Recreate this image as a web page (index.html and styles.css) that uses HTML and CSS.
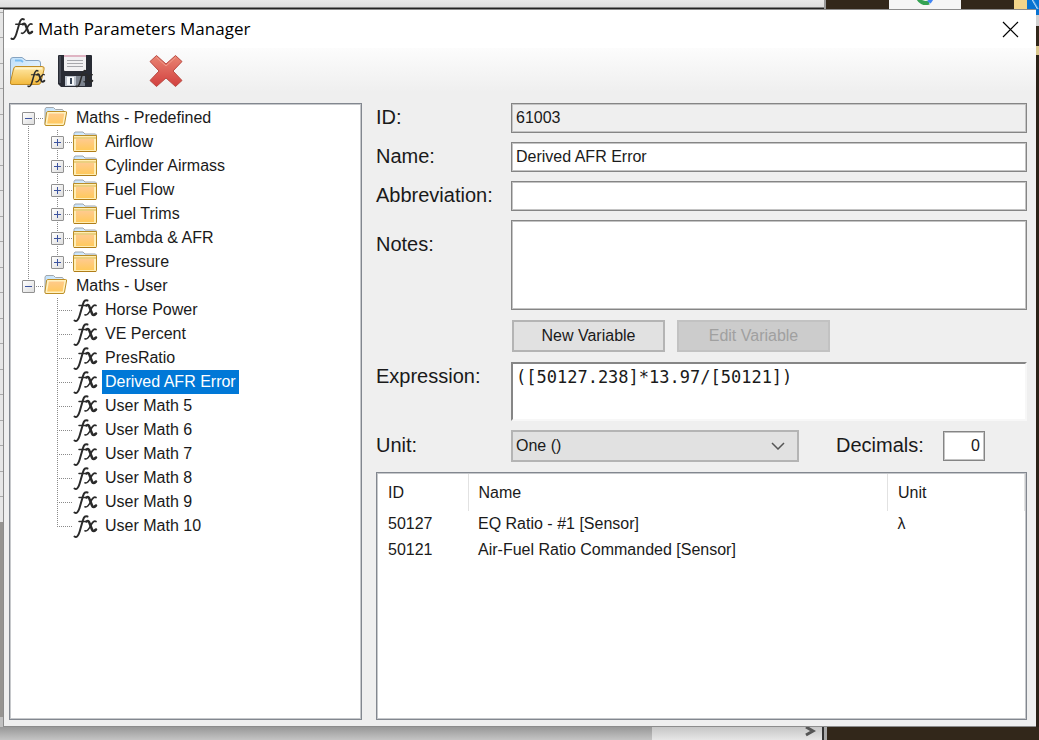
FILE: index.html
```html
<!DOCTYPE html>
<html lang="en">
<head>
<meta charset="utf-8">
<title>Math Parameters Manager</title>
<link rel="stylesheet" href="styles.css">
</head>
<body>
<svg class="defs" width="0" height="0" aria-hidden="true">
  <defs>
    <linearGradient id="gold" x1="0" y1="0" x2="0" y2="1"><stop offset="0" stop-color="#ffe9a8"/><stop offset="1" stop-color="#f3b93c"/></linearGradient>
    <linearGradient id="peach" x1="0" y1="0" x2="0" y2="1"><stop offset="0" stop-color="#ffca8e"/><stop offset="1" stop-color="#ffc95c"/></linearGradient>
    <linearGradient id="sky" x1="0" y1="0" x2="1" y2="1"><stop offset="0" stop-color="#bfe0fb"/><stop offset="1" stop-color="#f4f9fd"/></linearGradient>
    <linearGradient id="red" x1="0" y1="0" x2="0" y2="1"><stop offset="0" stop-color="#e98472"/><stop offset="1" stop-color="#d2403f"/></linearGradient>
    <symbol id="fx" viewBox="0 0 26 25">
      <g fill="none" stroke="#2a2a2a" stroke-linecap="round">
        <path d="M2.500 22.500Q5.500 24.500 7.500 18L11 6Q12.500 1 15.500 2.500" stroke-width="2"/>
        <path d="M7 7.500H14" stroke-width="1.500"/>
        <path d="M14.500 7.500Q16.500 6 17.500 9L20 15.500Q21 18.500 24 15.500" stroke-width="2.500"/>
        <path d="M24 7.500Q21.500 6 18.800 11.500Q15.500 18 13 16.800" stroke-width="1.700"/>
      </g>
    </symbol>
    <symbol id="folder" viewBox="0 0 26 24">
      <path d="M2 8V3.500L3 2H11L13 4H23.500L24.500 5V8Z" fill="url(#sky)" stroke="#a3a8ad"/>
      <path d="M1.500 5.500H24.500V20.500Q24.500 21.500 23.500 21.500H2.500Q1.500 21.500 1.500 20.500Z" fill="#ffeeb4" stroke="#b98d27"/>
      <path d="M2 21.500H24" stroke="#b07d18"/>
      <path d="M2 8H24" stroke="#d8b04b"/>
      <rect x="4" y="9" width="18" height="11" fill="url(#peach)"/>
    </symbol>
    <symbol id="folder-open" viewBox="0 0 26 24">
      <path d="M2 18V3L3 1.500H10.500L12.500 3.500H19.500L20.500 5V12Z" fill="url(#sky)" stroke="#a3a8ad"/>
      <path d="M5 6.500H22.500L20.500 18.500H3Z" fill="url(#peach)" stroke="#fff2c2" stroke-width="2"/>
      <path d="M4.500 5.500H22.500Q24 5.500 23.500 7L21.500 18Q21.200 19.500 20 19.500H3Q1.500 19.500 2 17.500L3.500 7Q3.800 5.500 4.500 5.500Z" fill="none" stroke="#bd8e25"/>
    </symbol>
  </defs>
</svg>
<div class="desktop">
  <div class="top-strip" aria-hidden="true">
    <div class="app-top"></div>
    <div class="wall wall-left"></div>
    <div class="tile"><svg width="20" height="8" viewBox="0 0 20 8"><path d="M3 -3A8 7 0 0 0 14 2.500" fill="none" stroke="#34a353" stroke-width="4"/><path d="M14 2.500L17 -2" stroke="#4285f4" stroke-width="4"/></svg></div>
    <div class="wall"></div>
    <div class="yellow"></div>
    <div class="blue"></div>
  </div>
  <div class="middle">
    <div class="left-strip" aria-hidden="true"></div>
    <main class="dialog">
      <header class="titlebar">
        <svg width="25" height="24"><use href="#fx"/></svg>
        <h1>Math Parameters Manager</h1>
        <button class="close" type="button" aria-label="Close"><svg width="17" height="17" viewBox="0 0 17 17"><path d="M1 1L16 16M16 1L1 16" stroke="#000" stroke-width="1.200"/></svg></button>
      </header>
      <div class="toolbar">
        <button type="button" aria-label="Open math"><svg width="38" height="36" viewBox="0 0 38 36">
          <path d="M1.500 29V7Q1.500 4.500 4 4.500H13L17 7.500H29Q31.500 7.500 31.500 10V22Z" fill="url(#sky)" stroke="#86a3c0"/>
          <path d="M6 7.500H12L14 9" fill="none" stroke="#78bdf4" stroke-width="2"/>
          <path d="M7 13.500H33Q36 13.500 35 16.500L32 29Q31.500 31.500 29 31.500H3Q.800 31.500 1.500 29L4.500 16Q5 13.500 7 13.500Z" fill="url(#gold)" stroke="#c18c24"/>
          <path d="M6 15.500H33" stroke="#fff3c8" stroke-width="2"/>
          <use href="#fx" x="17" y="16" width="20" height="19"/></svg></button>
        <button type="button" aria-label="Save"><svg width="38" height="36" viewBox="0 0 38 36">
          <path d="M2 2H34Q35 2 35 3V33Q35 34 34 34H4L1 31V3Q1 2 2 2Z" fill="#282b34"/>
          <path d="M3 3V30" stroke="#626875"/>
          <path d="M7 2H29V17Q29 18 28 18H8Q7 18 7 17Z" fill="#f1f0f2"/>
          <path d="M7 2H29V4H7Z" fill="#dfb4c3"/>
          <path d="M10 7.500H26M10 10.500H26M10 13.500H26" stroke="#a7a7ac"/>
          <path d="M8 23H28V33H8Z" fill="#bdc4ce"/>
          <path d="M10 24H17V32H10Z" fill="#f6f8fa"/><path d="M13 25H15V31H13Z" fill="#3a4758"/>
          <path d="M19 23H28V33H19Z" fill="#7c838e"/>
          <use href="#fx" x="17" y="16" width="20" height="19"/></svg></button>
        <button class="delete" type="button" aria-label="Delete"><svg width="36" height="36" viewBox="0 0 36 36">
          <path d="M8.500 2.500L18 11L27.500 2.500L34 8.500L25 18L34 27.500L27.500 33.500L18 25L8.500 33.500L2 27.500L11 18L2 8.500Z" fill="url(#red)" stroke="#b94b43" stroke-linejoin="round"/>
          <path d="M8.500 4.500L18 13L27.500 4.500" fill="none" stroke="#f09a8a"/></svg></button>
      </div>
      <div class="content">
        <nav class="tree panel" aria-label="Maths">
          <ul>
            <li><div class="row"><span class="cell start"><button type="button" class="minus" aria-label="Collapse"></button></span><svg width="26" height="24"><use href="#folder-open"/></svg><span class="label">Maths - Predefined</span></div>
              <ul class="trunk">
                <li class="row"><span class="cell"><button type="button" class="plus" aria-label="Expand"></button></span><svg width="26" height="24"><use href="#folder"/></svg><span class="label">Airflow</span></li>
                <li class="row"><span class="cell"><button type="button" class="plus" aria-label="Expand"></button></span><svg width="26" height="24"><use href="#folder"/></svg><span class="label">Cylinder Airmass</span></li>
                <li class="row"><span class="cell"><button type="button" class="plus" aria-label="Expand"></button></span><svg width="26" height="24"><use href="#folder"/></svg><span class="label">Fuel Flow</span></li>
                <li class="row"><span class="cell"><button type="button" class="plus" aria-label="Expand"></button></span><svg width="26" height="24"><use href="#folder"/></svg><span class="label">Fuel Trims</span></li>
                <li class="row"><span class="cell"><button type="button" class="plus" aria-label="Expand"></button></span><svg width="26" height="24"><use href="#folder"/></svg><span class="label">Lambda &amp; AFR</span></li>
                <li class="row"><span class="cell end"><button type="button" class="plus" aria-label="Expand"></button></span><svg width="26" height="24"><use href="#folder"/></svg><span class="label">Pressure</span></li>
              </ul>
            </li>
            <li><div class="row"><span class="cell end"><button type="button" class="minus" aria-label="Collapse"></button></span><svg width="26" height="24"><use href="#folder-open"/></svg><span class="label">Maths - User</span></div>
              <ul>
                <li class="row"><span class="cell"></span><svg width="26" height="25"><use href="#fx"/></svg><span class="label">Horse Power</span></li>
                <li class="row"><span class="cell"></span><svg width="26" height="25"><use href="#fx"/></svg><span class="label">VE Percent</span></li>
                <li class="row"><span class="cell"></span><svg width="26" height="25"><use href="#fx"/></svg><span class="label">PresRatio</span></li>
                <li class="row"><span class="cell"></span><svg width="26" height="25"><use href="#fx"/></svg><span class="label selected">Derived AFR Error</span></li>
                <li class="row"><span class="cell"></span><svg width="26" height="25"><use href="#fx"/></svg><span class="label">User Math 5</span></li>
                <li class="row"><span class="cell"></span><svg width="26" height="25"><use href="#fx"/></svg><span class="label">User Math 6</span></li>
                <li class="row"><span class="cell"></span><svg width="26" height="25"><use href="#fx"/></svg><span class="label">User Math 7</span></li>
                <li class="row"><span class="cell"></span><svg width="26" height="25"><use href="#fx"/></svg><span class="label">User Math 8</span></li>
                <li class="row"><span class="cell"></span><svg width="26" height="25"><use href="#fx"/></svg><span class="label">User Math 9</span></li>
                <li class="row"><span class="cell end"></span><svg width="26" height="25"><use href="#fx"/></svg><span class="label">User Math 10</span></li>
              </ul>
            </li>
          </ul>
        </nav>
        <form class="details">
          <div class="fields">
            <label for="pid">ID:</label><input id="pid" class="box" type="text" value="61003" readonly>
            <label for="pname">Name:</label><input id="pname" class="box" type="text" value="Derived AFR Error">
            <label for="abbr">Abbreviation:</label><input id="abbr" class="box" type="text">
            <label for="notes" class="top-label notes-label">Notes:</label><textarea id="notes" class="box notes"></textarea>
            <div class="actions"><button type="button">New Variable</button><button type="button" disabled>Edit Variable</button></div>
            <label for="expr" class="top-label">Expression:</label><textarea id="expr" class="expression" spellcheck="false">([50127.238]*13.97/[50121])</textarea>
            <label for="unit">Unit:</label>
            <div class="unit-line">
              <div class="select-wrap"><select id="unit"><option>One ()</option></select><svg width="14" height="8" viewBox="0 0 14 8"><path d="M1 1L7 7L13 1" fill="none" stroke="#555" stroke-width="1.500"/></svg></div>
              <label for="dec">Decimals:</label><input id="dec" class="box decimals" type="text" value="0">
            </div>
          </div>
          <div class="panel variables">
            <table>
              <colgroup><col class="col-id"><col class="col-name"><col class="col-unit"></colgroup>
              <thead><tr><th>ID</th><th>Name</th><th>Unit</th></tr></thead>
              <tbody>
                <tr><td>50127</td><td>EQ Ratio - #1 [Sensor]</td><td>λ</td></tr>
                <tr><td>50121</td><td>Air-Fuel Ratio Commanded [Sensor]</td><td></td></tr>
              </tbody>
            </table>
          </div>
        </form>
      </div>
    </main>
    <div class="right-strip" aria-hidden="true"></div>
  </div>
  <div class="bottom-strip" aria-hidden="true">
    <div class="track"></div>
    <div class="scroll-end"><svg width="12" height="10" viewBox="0 0 12 10"><path d="M2 0L9 4L2 8" fill="none" stroke="#555" stroke-width="3"/></svg></div>
    <div class="app-edge"></div>
    <div class="wall"></div>
  </div>
</div>
</body>
</html>
```
FILE: styles.css
```css
* { box-sizing: border-box; }
body { margin: 0; font: 16px/24px "Liberation Sans", Arial, sans-serif; color: #1a1a1a; }
button, input, textarea, select { font: inherit; color: inherit; margin: 0; border-radius: 0; }
ul { list-style: none; margin: 0; padding: 0; }
svg { display: block; flex: none; }
.defs { position: absolute; }

/* Desktop behind the dialog */
.desktop { display: grid; grid-template-rows: 9px 1fr 13px; min-height: 100vh; background: #32271a; }
.top-strip, .bottom-strip { display: flex; overflow: hidden; }
.app-top { flex: 0 0 826px; background: linear-gradient(#e8e8e8, #dedede 7px, #222 8px); border-right: 2px solid #999; }
.wall { flex: 1 1 0; }
.wall-left { flex: 0 0 63px; }
.tile { flex: 0 0 72px; display: flex; justify-content: center; background: #f5f5f5; }
.yellow { flex: 0 0 13px; background: #f3d58a; }
.blue { flex: 0 0 12px; background: linear-gradient(60deg, #0873d2 55%, #b9dcf7 60%, #0873d2 72%); }
.middle { display: grid; grid-template-columns: 3px 1fr 3px; }
.left-strip {
  background:
    linear-gradient(#969491, #969491) 0 513px / 3px 195px no-repeat,
    linear-gradient(#c0c0c0, #c0c0c0) 0 708px / 3px 20px no-repeat,
    linear-gradient(#e6e6e6 3px, #aaa 3px 4px, #e6e6e6 4px 29px, #aaa 29px 30px, #e6e6e6 30px) 0 25px / 3px 51px;
}
.right-strip { background: linear-gradient(#0873d2 6px, #d0d0d0 6px 17px, #32271a 17px 37px, #d9c78d 37px 46px, #2b2117 46px); }
.track { flex: 0 0 652px; background: linear-gradient(#989898, #c4c4c4); }
.scroll-end { flex: 0 0 170px; display: flex; justify-content: flex-end; padding-right: 6px; background: linear-gradient(#c6c6c6, #e6e6e6); }
.app-edge { flex: 0 0 5px; background: #a8a8a8; border-left: 2px solid #333; }

/* Dialog frame */
.dialog { display: flex; flex-direction: column; background: #efefef; border: 1px solid #8c8c8c; border-right: 0; min-width: 0; }
.titlebar { display: flex; align-items: center; height: 38px; padding: 0 17px 0 5px; background: #fff; }
.titlebar h1 { flex: 1; margin: 0 0 0 4px; font: 17px/24px "Open Sans", "Segoe UI", sans-serif; color: #000; }
.close { border: 0; padding: 0; background: none; }
.toolbar { display: flex; align-items: flex-start; gap: 10px; height: 55px; padding: 5px 5px 0; background: linear-gradient(#fcfcfc, #efefef 44px); }
.toolbar button { border: 0; padding: 0; background: none; }
.toolbar .delete { margin-left: 43px; }
.content { flex: 1; display: grid; grid-template-columns: 353fr 651fr; gap: 14px; padding: 0 9px 6px 5px; }
.panel { background: #fff; border: 1px solid #82878f; outline: 1px solid #c6c8cb; outline-offset: -2px; min-width: 0; }

/* Tree */
.tree { padding: 2px 4px; }
.tree ul ul { padding-left: 29px; }
.row { display: flex; align-items: center; height: 24px; }
.cell {
  flex: none; display: flex; align-items: center; width: 29px; height: 24px; padding-left: 8px;
  background:
    repeating-linear-gradient(to right, #8a8a8a 0 1px, transparent 1px 2px) 14px 12px / 15px 1px no-repeat,
    repeating-linear-gradient(#8a8a8a 0 1px, transparent 1px 2px) 14px 0 / 1px 24px no-repeat;
}
.cell.end { background-size: 15px 1px, 1px 12px; }
.cell.start { background-position: 14px 12px, 14px 12px; background-size: 15px 1px, 1px 12px; }
.trunk { background: repeating-linear-gradient(#8a8a8a 0 1px, transparent 1px 2px) 14px 0 / 1px 100% no-repeat; }
.minus, .plus { width: 13px; height: 13px; padding: 0; border: 1px solid #919191; border-radius: 1px; background: linear-gradient(#3d54a0, #3d54a0) center / 7px 1px no-repeat, linear-gradient(135deg, #fff, #dedede); }
.plus { background: linear-gradient(#3d54a0, #3d54a0) center / 7px 1px no-repeat, linear-gradient(#3d54a0, #3d54a0) center / 1px 7px no-repeat, linear-gradient(135deg, #fff, #dedede); }
.label { margin-left: 4px; padding: 0 3px; white-space: nowrap; }
.selected { background: #0078d7; color: #fff; }

/* Parameter form */
.details { display: flex; flex-direction: column; gap: 10px; min-width: 0; }
.fields { display: grid; grid-template-columns: 135px 1fr; row-gap: 9px; }
.fields label { align-self: center; font-size: 20px; line-height: 24px; padding-bottom: 3px; }
.fields .top-label { align-self: start; padding-top: 2px; }
.fields .notes-label { padding-top: 12px; }
.box { width: 100%; height: 30px; padding: 0 4px; border: 1px solid #858585; outline: 1px solid #c4c4c4; outline-offset: -2px; background: #fff; resize: none; display: block; }
.box:read-only { background: #efefef; }
.notes { height: 90px; }
.actions { grid-column: 2; display: flex; gap: 12px; padding: 1px 0 1px 1px; }
.actions button { width: 153px; height: 32px; padding: 0; border: 2px solid #b4b4b4; background: #e1e1e1; }
.actions button:disabled { border-color: #c2c2c2; background: #ccc; color: #a0a0a0; }
.expression { width: 100%; height: 59px; padding: 2px 3px; border: 2px solid; border-color: #868686 #f7f7f7 #f7f7f7 #868686; background: #fff; font: 17px/22px "DejaVu Sans Mono", Consolas, monospace; resize: none; overflow: hidden; display: block; }
.unit-line { display: flex; align-items: center; }
.select-wrap { display: grid; grid-template-columns: 1fr 28px; flex: 0 1 288px; align-items: center; }
.select-wrap select { grid-area: 1 / 1 / 2 / 3; height: 32px; padding: 0 3px; appearance: none; border: 2px solid #b4b4b4; background: #e1e1e1; }
.select-wrap svg { grid-area: 1 / 2; pointer-events: none; }
.unit-line label { margin-left: 37px; }
.unit-line .decimals { width: 42px; margin-left: 19px; text-align: right; }

/* Variables table */
.variables { flex: 1; padding: 1px; }
table { width: 100%; border-collapse: collapse; table-layout: fixed; }
.col-id { width: 90px; }
.col-unit { width: 137px; }
th, td { height: 26px; padding: 0 0 0 10px; text-align: left; font-weight: normal; white-space: nowrap; }
th { height: 37px; border-right: 1px solid #e2e2e2; }
```
